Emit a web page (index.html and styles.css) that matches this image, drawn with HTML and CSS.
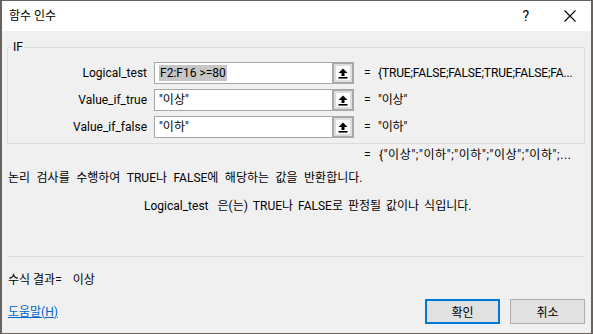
FILE: index.html
```html
<!doctype html>
<html>
<head>
<meta charset="utf-8">
<title>함수 인수</title>
<link rel="stylesheet" href="styles.css">
</head>
<body>
<div class="window">
	<div class="titlebar">
		<span class="title">함수 인수</span>
		<span class="help">?</span>
		<svg class="close" width="12" height="12" viewBox="0 0 12 12"><path d="M0.5 0.5 L11.5 11.5 M11.5 0.5 L0.5 11.5" stroke="#000" stroke-width="1.1" fill="none"/></svg>
	</div>
	<div class="content">
		<fieldset class="group">
			<legend>IF</legend>
			<div class="args">
				<label class="arg-name">Logical_test</label>
				<div class="field"><span class="sel">F2:F16 &gt;=80</span></div>
				<div class="pick"><span class="pick-inner"><svg width="10" height="11" viewBox="0 0 10 11"><path d="M5 0.5 L9.5 5 H6.5 V8 H3.5 V5 H0.5 Z" fill="#000"/><rect x="0.5" y="9" width="9" height="1.6" fill="#000"/></svg></span></div>
				<div class="eq">=</div>
				<div class="val">{TRUE;FALSE;FALSE;TRUE;FALSE;FA...</div>

				<label class="arg-name">Value_if_true</label>
				<div class="field">"이상"</div>
				<div class="pick"><span class="pick-inner"><svg width="10" height="11" viewBox="0 0 10 11"><path d="M5 0.5 L9.5 5 H6.5 V8 H3.5 V5 H0.5 Z" fill="#000"/><rect x="0.5" y="9" width="9" height="1.6" fill="#000"/></svg></span></div>
				<div class="eq">=</div>
				<div class="val">"이상"</div>

				<label class="arg-name">Value_if_false</label>
				<div class="field">"이하"</div>
				<div class="pick"><span class="pick-inner"><svg width="10" height="11" viewBox="0 0 10 11"><path d="M5 0.5 L9.5 5 H6.5 V8 H3.5 V5 H0.5 Z" fill="#000"/><rect x="0.5" y="9" width="9" height="1.6" fill="#000"/></svg></span></div>
				<div class="eq">=</div>
				<div class="val">"이하"</div>
			</div>
		</fieldset>
		<div class="result-row"><span class="eq">=</span><span class="val">{"이상";"이하";"이하";"이상";"이하";...</span></div>
		<p class="desc">논리 검사를 수행하여 TRUE나 FALSE에 해당하는 값을 반환합니다.</p>
		<p class="arg-desc"><span class="arg-desc-name">Logical_test</span>은(는) TRUE나 FALSE로 판정될 값이나 식입니다.</p>
		<div class="sep"></div>
		<p class="formula">수식 결과=<span class="formula-val">이상</span></p>
		<div class="footer">
			<a class="help-link" href="#">도움말(H)</a>
			<div class="buttons">
				<button class="btn btn-default">확인</button>
				<button class="btn">취소</button>
			</div>
		</div>
	</div>
</div>
</body>
</html>
```

FILE: styles.css
```css
* { margin: 0; padding: 0; box-sizing: border-box; }
html, body { width: 593px; height: 334px; overflow: hidden; }
body {
	background: #5a5048;
	font-family: Roboto, "Noto Sans CJK KR", sans-serif;
	font-size: 12px;
	line-height: 16px;
	color: #000;
}
.window {
	width: 593px;
	height: 334px;
	border: 1px solid #6a625c;
	border-left-width: 2px;
	border-right-width: 2px;
	background: #f0f0f0;
	display: flex;
	flex-direction: column;
}
.titlebar {
	flex-shrink: 0;
	height: 30px;
	background: #fff;
	display: flex;
	align-items: center;
	padding-left: 7px;
	padding-right: 15px;
}
.title { flex: 1; }
.help { font-size: 14px; margin-right: 35px; }
.close { display: block; }

.content {
	flex: 1;
	padding: 0 6px 0 5px;
	display: flex;
	flex-direction: column;
}
.content > * { flex-shrink: 0; }
.group {
	margin-top: 8px;
	border: 1px solid #dcdcdc;
	padding: 7px 0 5px 0;
}
.group legend {
	margin-left: 4px;
	padding: 0 1px;
	color: #000;
	line-height: 16px;
}
.args {
	display: grid;
	grid-template-columns: 139px 185px 22px 24px auto;
	grid-auto-rows: 22px;
	row-gap: 5px;
	align-items: center;
}
.arg-name { text-align: right; }
.args .arg-name { grid-column: 1; }
.field {
	height: 22px;
	margin-left: 7px;
	border: 1px solid #a6a6a6;
	border-right: none;
	background: #fff;
	padding: 2px 3px 0 4px;
	white-space: nowrap;
	overflow: hidden;
}
.sel { background: #c6c6c6; display: inline-block; padding: 0 1px; line-height: 16px; }
.pick {
	height: 22px;
	width: 22px;
	border: 2px solid #a9a9a9;
	background: #dedede;
	display: flex;
	align-items: center;
	justify-content: center;
}
.pick-inner {
	width: 14px;
	height: 14px;
	background: #fff;
	display: flex;
	align-items: center;
	justify-content: center;
}
.args .eq { padding-left: 10px; }
.args .val { white-space: nowrap; letter-spacing: -0.15px; }

.result-row {
	display: flex;
	margin-top: 3px;
	padding-left: 357px;
	white-space: nowrap;
}
.result-row .eq { width: 15px; }
.result-row .val { letter-spacing: 0.6px; }
.desc { margin-top: 7px; padding-left: 1px; word-spacing: 3.5px; }
.arg-desc { margin-top: 12px; padding-left: 137px; word-spacing: 2px; }
.arg-desc-name { margin-right: 9px; }
.sep {
	margin-top: 42px;
	height: 1px;
	background: #dcdcdc;
	margin-left: 1px;
}
.formula { margin-top: 15px; padding-left: 1px; }
.formula-val { margin-left: 11px; }
.footer {
	margin-top: 11px;
	display: flex;
	align-items: center;
	justify-content: space-between;
	padding-left: 1px;
}
.help-link { color: #0066cc; text-decoration: underline; }
.buttons { display: flex; gap: 10px; }
.btn {
	width: 75px;
	height: 25px;
	font-family: inherit;
	font-size: 12px;
	background: #e1e1e1;
	border: 1px solid #adadad;
	color: #000;
}
.btn-default { border: 2px solid #0078d7; }
```
